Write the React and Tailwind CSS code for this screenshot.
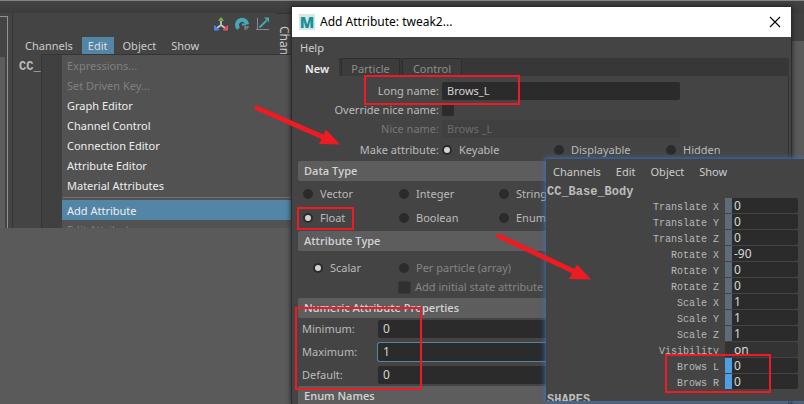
import React from "react";

const SANS = "font-['Noto_Sans',sans-serif]";
const MONO = "font-['Liberation_Mono',monospace]";

const menuItems = [
  { label: "Expressions...", off: true },
  { label: "Set Driven Key...", off: true },
  { label: "Graph Editor" },
  { label: "Channel Control" },
  { label: "Connection Editor" },
  { label: "Attribute Editor" },
  { label: "Material Attributes" },
];

const channels = [
  ["Translate X", "0", "key"],
  ["Translate Y", "0", "key"],
  ["Translate Z", "0", "key"],
  ["Rotate X", "-90", "key"],
  ["Rotate Y", "0", "key"],
  ["Rotate Z", "0", "key"],
  ["Scale X", "1", "key"],
  ["Scale Y", "1", "key"],
  ["Scale Z", "1", "key"],
  ["Visibility", "on", "none"],
  ["Brows L", "0", "active"],
  ["Brows R", "0", "active"],
];

function MenuBar({ active, className }) {
  return (
    <nav className={`flex gap-[3px] text-[11px] text-[#cccccc] ${className}`}>
      {["Channels", "Edit", "Object", "Show"].map((name) => (
        <button
          key={name}
          type="button"
          className={`h-[17px] px-[6px] leading-[18px] ${name === active ? "bg-[#5285a6] text-[#dddddd]" : ""}`}
        >
          {name}
        </button>
      ))}
    </nav>
  );
}

function ToolIcons() {
  return (
    <div className="flex h-6 items-start gap-[7px] pt-[3px]">
      <svg width="14" height="16" viewBox="0 0 14 16">
        <path d="M7 5v5M7 9l-4 3M7 9l4 3" stroke="#c4c4c4" strokeWidth="1.800" fill="none" />
        <path d="M7 1L3.800 4.800h6.400z" fill="#72b043" />
        <path d="M0.500 9.500L4.800 14H0z" fill="#4d86ee" stroke="#4d86ee" />
        <path d="M13.500 9.500L9.200 14H14z" fill="#e25555" stroke="#e25555" />
      </svg>
      <svg width="14" height="16" viewBox="0 0 14 16">
        <path d="M3.600 12.500A5 5 0 1 1 12 8.500" stroke="#43a8b4" strokeWidth="4" fill="none" />
        <path d="M7 8.500h4" stroke="#43a8b4" strokeWidth="2" />
        <path d="M9 10h5c0 2-2 4-4.500 4.500z" fill="#777777" />
      </svg>
      <svg width="14" height="16" viewBox="0 0 14 16">
        <path d="M1.500 2v12M0 13.500h13" stroke="#8a8a8a" fill="none" />
        <path d="M3.500 11.500l7-7" stroke="#43a8b4" strokeWidth="1.800" />
        <path d="M8 1.500h5v5z" fill="#43a8b4" />
      </svg>
    </div>
  );
}

function EditMenu() {
  return (
    <div className="absolute top-[54px] left-[41px] flex h-[174px] w-[251px] border border-b-0 border-[#343434] bg-[#525252] text-[11px]">
      <div className="w-5 shrink-0 bg-[#404040]" />
      <div className="flex min-w-0 flex-1 flex-col overflow-hidden pt-px">
        {menuItems.map((item) => (
          <button
            key={item.label}
            type="button"
            disabled={item.off}
            className={`h-5 shrink-0 pl-[5px] text-left leading-5 ${item.off ? "text-[#808080]" : "text-[#eeeeee]"}`}
          >
            {item.label}
          </button>
        ))}
        <hr className="mt-px mb-[2px] ml-px shrink-0 border-[#707070]" />
        <button type="button" className="h-5 shrink-0 bg-[#5285a6] pl-[5px] text-left leading-[22px] text-[#eeeeee]">
          Add Attribute
        </button>
        <button type="button" disabled className="h-5 shrink-0 pl-[5px] text-left leading-5 text-[#808080]">
          Edit Attribute
        </button>
      </div>
    </div>
  );
}

function Radio({ name, label, checked, disabled, className, gap = "gap-2" }) {
  return (
    <label className={`flex items-center whitespace-nowrap ${gap} ${disabled ? "text-[#848484]" : ""} ${className ?? ""}`}>
      <input
        type="radio"
        name={name}
        defaultChecked={checked}
        disabled={disabled}
        className="size-[10px] shrink-0 appearance-none rounded-full bg-[#2b2b2b] checked:border-2 checked:border-[#2b2b2b] checked:bg-[#d4d4d4]"
      />
      {label}
    </label>
  );
}

function Section({ title }) {
  return (
    <h2 className="ml-[6px] h-5 rounded-l-xs bg-[#5d5d5d] pl-[6px] font-['Open_Sans','Noto_Sans',sans-serif] text-[11px] leading-5 font-semibold text-[#d2d2d2]">
      {title}
    </h2>
  );
}

const fieldStyle = "h-[18px] rounded-xs bg-[#2b2b2b] px-[5px] leading-[18px] text-[#d4d4d4] outline-none";

function NumberRow({ id, label, value, focus }) {
  return (
    <div className="flex items-center">
      <label htmlFor={id} className="w-[76px] shrink-0">{label}</label>
      <input
        id={id}
        defaultValue={value}
        className={`${fieldStyle} min-w-0 flex-1 text-xs ${focus ? "ring-1 ring-[#5285a6]" : ""}`}
      />
    </div>
  );
}

function AttributeDialog() {
  return (
    <section className="absolute top-[6px] right-3 bottom-0 left-[291px] flex flex-col overflow-hidden border border-b-0 border-[#2c2c2c] bg-[#444444] text-[11px] text-[#bbbbbb] shadow-[0_0_5px_#222222]">
      <header className="flex h-[30px] shrink-0 items-center bg-white pr-2 pl-[7px] text-black">
        <span className="flex h-4 w-4 items-center justify-center bg-[#d5e8e8] text-[15px] leading-4 font-black text-[#159197]">
          M
        </span>
        <h1 className="ml-[5px] flex-1 text-xs">Add Attribute: tweak2...</h1>
        <button type="button" aria-label="Close" className="p-[2px]">
          <svg width="12" height="12" viewBox="0 0 12 12">
            <path d="M1 1l10 10M11 1L1 11" stroke="#000000" strokeWidth="1.100" />
          </svg>
        </button>
      </header>
      <nav className="h-[21px] shrink-0 pl-2 leading-[21px] text-[#cccccc]">
        <button type="button">Help</button>
      </nav>
      <div className="mr-[2px] ml-[3px] flex h-[18px] shrink-0 gap-[2px] bg-[#373737] text-[#8c8c8c]">
        <button type="button" className="w-11 rounded-t-xs bg-[#444444] leading-[22px] font-semibold text-[#eeeeee]">New</button>
        <button type="button" className="w-[59px] rounded-t-xs border border-b-0 border-[#2e2e2e] bg-[#3c3c3c] leading-5">Particle</button>
        <button type="button" className="w-[60px] rounded-t-xs border border-b-0 border-[#2e2e2e] bg-[#3c3c3c] leading-5">Control</button>
      </div>
      <div className="mr-[2px] flex flex-1 shrink-0 flex-col border-r border-[#303030]">
        <div className="mt-[6px] grid grid-cols-[147px_238px] items-center gap-x-[3px] gap-y-px">
          <label htmlFor="long" className="text-right">Long name:</label>
          <input id="long" defaultValue="Brows_L" className={fieldStyle} />
          <label htmlFor="override" className="text-right leading-[18px]">Override nice name:</label>
          <input id="override" type="checkbox" className="size-3 appearance-none rounded-xs bg-[#2b2b2b]" />
          <label htmlFor="nice" className="text-right text-[#777777]">Nice name:</label>
          <input
            id="nice"
            disabled
            defaultValue="Brows _L"
            className="h-[18px] rounded-xs bg-[#404040] px-[5px] leading-[18px] text-[#6c6c6c]"
          />
        </div>
        <div className="mt-[3px] mb-[2px] flex h-[18px] items-center">
          <span className="mr-[3px] w-[147px] text-right">Make attribute:</span>
          <Radio name="make" label="Keyable" checked gap="gap-[7px]" className="w-28" />
          <Radio name="make" label="Displayable" gap="gap-[7px]" className="w-28" />
          <Radio name="make" label="Hidden" gap="gap-[7px]" />
        </div>
        <Section title="Data Type" />
        <div className="grid h-[50px] grid-cols-[96px_100px_100px] content-center gap-y-[6px] pl-[11px] leading-[18px]">
          <Radio name="data" label="Vector" gap="gap-[7px]" />
          <Radio name="data" label="Integer" gap="gap-[7px]" />
          <Radio name="data" label="String" gap="gap-[7px]" />
          <Radio name="data" label="Float" checked gap="gap-[7px]" />
          <Radio name="data" label="Boolean" gap="gap-[7px]" />
          <Radio name="data" label="Enum" gap="gap-[7px]" />
        </div>
        <Section title="Attribute Type" />
        <div className="mt-[7px] flex h-5 items-center pl-[21px]">
          <Radio name="type" label="Scalar" checked gap="gap-[7px]" className="w-[86px]" />
          <Radio name="particle" label="Per particle (array)" disabled gap="gap-[7px]" />
        </div>
        <label className="mb-[2px] flex h-[18px] items-center gap-1 pl-[106px] text-[#848484]">
          <input type="checkbox" disabled className="size-[13px] appearance-none rounded-xs border border-[#383838] bg-[#303030]" />
          Add initial state attribute
        </label>
        <Section title="Numeric Attribute Properties" />
        <div className="flex flex-col gap-[5px] pt-[2px] pb-[2px] pl-[10px]">
          <NumberRow id="min" label="Minimum:" value="0" />
          <NumberRow id="max" label="Maximum:" value="1" focus />
          <NumberRow id="def" label="Default:" value="0" />
        </div>
        <Section title="Enum Names" />
      </div>
    </section>
  );
}

const tick = {
  key: "bg-[#5f6c78]",
  active: "bg-[#4f9ee3]",
  none: "bg-[#333333]",
};

function ChannelBox() {
  return (
    <section className="absolute top-[159px] right-0 bottom-[3px] left-[546px] bg-[#444444] shadow-[0_0_5px_1px_#3a72b4]">
      <div className="flex h-full flex-col overflow-hidden">
        <MenuBar className="h-6 shrink-0 items-center pl-px" />
        <h2 className={`h-[15px] shrink-0 pl-px text-xs leading-[19px] font-bold text-[#bcbcbc] ${MONO}`}>CC_Base_Body</h2>
        <div className="flex shrink-0 flex-col gap-px pr-[6px]">
          {channels.map(([name, value, kind]) => (
            <label key={name} className="flex h-[15px]">
              <span className={`flex-1 pr-[6px] text-right text-[10px] leading-5 text-[#b8b8b8] ${MONO}`}>{name}</span>
              <span className={`w-[7px] ${tick[kind]}`} />
              <input
                defaultValue={value}
                className={`w-[66px] rounded-r-xs pl-[2px] text-xs leading-[15px] text-[#d8d8d8] outline-none ${kind === "none" ? "bg-[#333333]" : "bg-[#2b2b2b]"}`}
              />
            </label>
          ))}
        </div>
        <h2 className={`mt-1 pl-px text-xs leading-[14px] font-bold text-[#bcbcbc] ${MONO}`}>SHAPES</h2>
      </div>
    </section>
  );
}

function Marks() {
  return (
    <svg width="804" height="404" viewBox="0 0 804 404" className="pointer-events-none absolute top-0 left-0">
      <g fill="none" stroke="#ed1c24" strokeWidth="2">
        <rect x="365" y="76" width="154" height="28" />
        <rect x="298" y="208" width="55" height="21" />
        <rect x="296" y="308" width="125" height="81" />
        <rect x="666" y="355" width="104" height="37" />
      </g>
      <g fill="#ed1c24" stroke="#ed1c24" strokeLinecap="round">
        <path d="M257 108l68 30M499 236l74 35" strokeWidth="5" />
        <path d="M326 129.500l14 15-21-.500z" stroke="none" />
        <path d="M577 264.500l14 15-22-.500z" stroke="none" />
      </g>
    </svg>
  );
}

export default function App() {
  return (
    <main className={`relative flex h-screen w-full flex-col overflow-hidden bg-[#5a5a5a] ${SANS}`}>
      <div className="h-[13px] shrink-0 border-t border-[#858585] bg-linear-to-b from-[#444444] to-[#3c3c3c]" />
      <div className="flex h-[215px] shrink-0">
        <div className="flex w-3 flex-col bg-[#444444] pt-[3px]">
          <div className="flex w-2 flex-1 flex-col border-t border-r border-[#929292]">
            <div className="mt-10 w-[5px] flex-1 bg-[#5d5d5d]" />
          </div>
        </div>
        <div className="flex w-[264px] flex-col border-l border-[#363636] bg-[#444444]">
          <div className="flex justify-end pr-[6px]"><ToolIcons /></div>
          <MenuBar active="Edit" className="pl-[6px]" />
          <h2 className={`pt-[5px] pl-[6px] text-xs font-bold text-[#bcbcbc] ${MONO}`}>CC_Base</h2>
        </div>
        <div className="w-4 overflow-hidden border-t border-[#343434] bg-[#444444] pt-3">
          <span className="block text-xs leading-4 text-[#cccccc] [writing-mode:vertical-rl]">Channel Box</span>
        </div>
        <div className="flex-1 bg-[#5a5a5a]"><div className="h-7 bg-[#404040]" /></div>
      </div>
      <EditMenu />
      <AttributeDialog />
      <ChannelBox />
      <Marks />
    </main>
  );
}
